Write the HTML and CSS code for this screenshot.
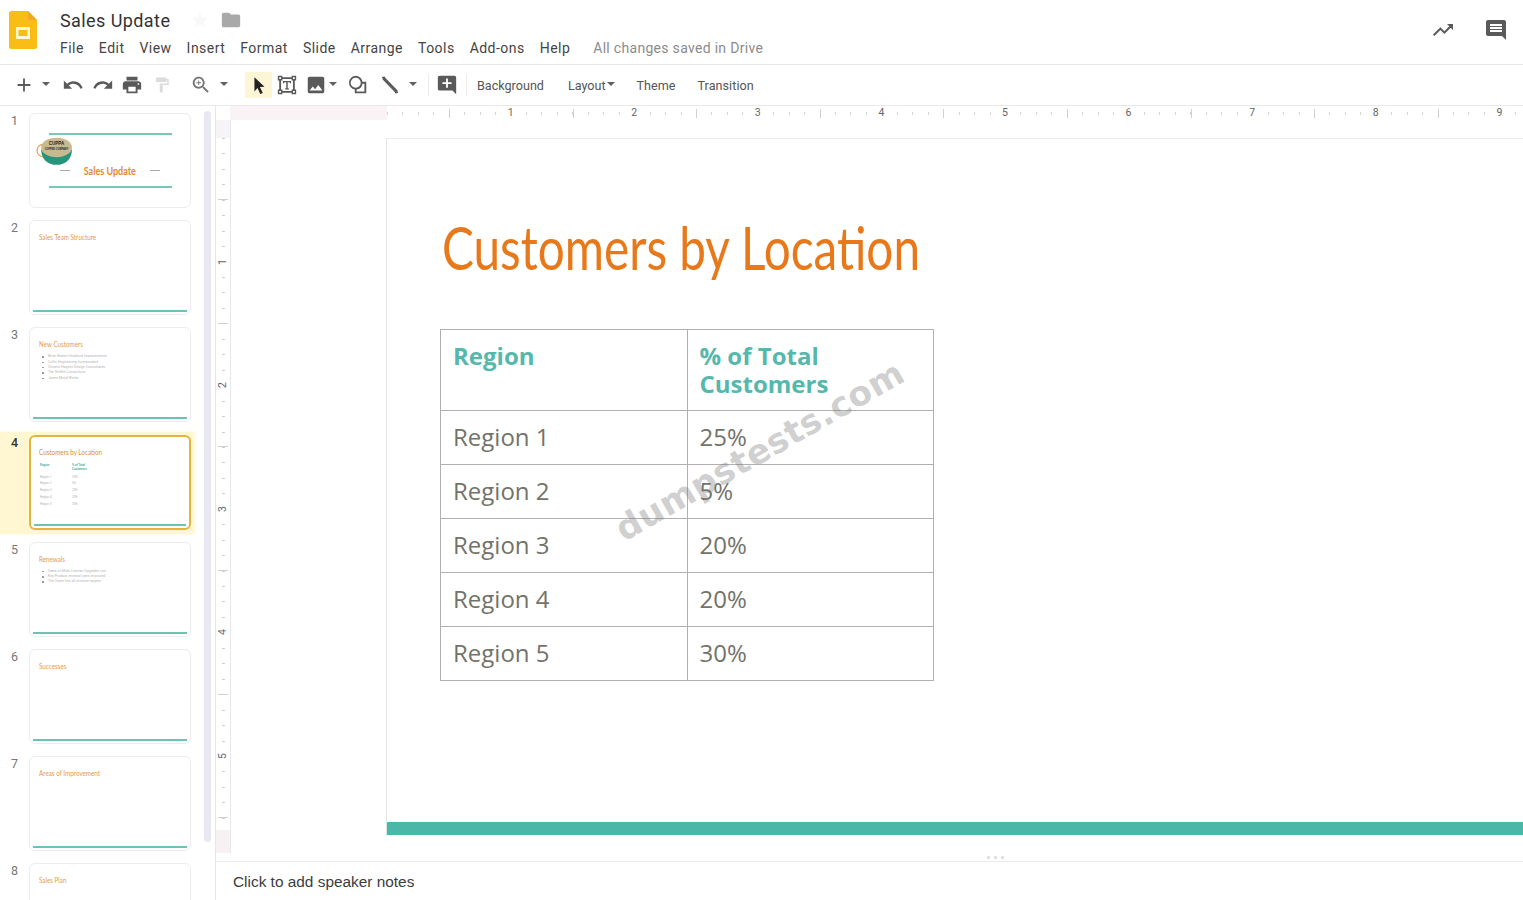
FILE: index.html
```html
<!DOCTYPE html>
<html lang="en">
<head>
<meta charset="utf-8">
<title>Sales Update</title>
<link rel="stylesheet" href="styles.css">
</head>
<body>
<div class="app">
  <header class="topbar">
    <svg class="logo" viewBox="0 0 28 38"><path fill="#f9bd16" d="M2.500 0H19l9 9v26.500a2.500 2.500 0 0 1-2.500 2.500h-23A2.500 2.500 0 0 1 0 35.500v-33A2.500 2.500 0 0 1 2.500 0z"/><path fill="#f5a623" d="M19 0l9 9h-7a2 2 0 0 1-2-2z"/><path fill="#fff6d8" d="M7 16h14v12H7z"/><path fill="#f9bd16" d="M9.500 19h9v6h-9z"/></svg>
    <div class="doc">
      <div class="doc-title">
        <span class="doc-name">Sales Update</span>
        <svg class="star" viewBox="0 0 24 24"><path fill="#f8f8f8" d="M12 17.300l6.200 3.700-1.600-7L22 9.200l-7.200-.6L12 2 9.200 8.600 2 9.200 7.500 14l-1.700 7z"/></svg>
        <svg class="folder" viewBox="0 0 24 24"><path fill="#a9a9a9" d="M10 4H4c-1.100 0-1.990.9-1.990 2L2 18c0 1.100.9 2 2 2h16c1.100 0 2-.9 2-2V8c0-1.100-.9-2-2-2h-8l-2-2z"/></svg>
      </div>
      <nav class="menu">
        <span>File</span><span>Edit</span><span>View</span><span>Insert</span><span>Format</span><span>Slide</span><span>Arrange</span><span>Tools</span><span>Add-ons</span><span>Help</span>
        <span class="saved">All changes saved in Drive</span>
      </nav>
    </div>
    <div class="top-actions">
      <svg class="ic" viewBox="0 0 24 24"><path d="M16 6l2.290 2.290-4.880 4.880-4-4L2 16.590 3.410 18l6-6 4 4 6.300-6.290L22 12V6z"/></svg>
      <svg class="ic" viewBox="0 0 24 24"><path d="M21.990 4c0-1.100-.89-2-1.990-2H4c-1.100 0-2 .9-2 2v12c0 1.100.9 2 2 2h14l4 4-.01-18zM18 14H6v-2h12v2zm0-3H6V9h12v2zm0-3H6V6h12v2z"/></svg>
    </div>
  </header>

  <div class="toolbar">
    <svg class="ic" viewBox="0 0 24 24"><path d="M19 13h-6v6h-2v-6H5v-2h6V5h2v6h6v2z"/></svg>
    <span class="caret g4"></span>
    <svg class="ic g9" viewBox="0 0 24 24"><path d="M12.500 8c-2.650 0-5.050.99-6.900 2.600L2 7v9h9l-3.620-3.620c1.390-1.160 3.160-1.880 5.120-1.880 3.540 0 6.550 2.310 7.600 5.500l2.370-.78C21.080 11.030 17.150 8 12.500 8z"/></svg>
    <svg class="ic g6" viewBox="0 0 24 24"><path d="M18.400 10.600C16.550 8.990 14.150 8 11.500 8c-4.650 0-8.580 3.030-9.960 7.220L3.900 16c1.050-3.190 4.050-5.500 7.600-5.500 1.950 0 3.730.72 5.120 1.880L13 16h9V7l-3.600 3.600z"/></svg>
    <svg class="ic g5" viewBox="0 0 24 24"><path d="M19 8H5c-1.660 0-3 1.340-3 3v6h4v4h12v-4h4v-6c0-1.660-1.340-3-3-3zm-3 11H8v-5h8v5zm3-7c-.55 0-1-.45-1-1s.45-1 1-1 1 .45 1 1-.45 1-1 1zm-1-9H6v4h12V3z"/></svg>
    <svg class="ic g6 faint" viewBox="0 0 24 24"><path d="M18 4V3c0-.55-.45-1-1-1H5c-.55 0-1 .45-1 1v4c0 .55.45 1 1 1h12c.55 0 1-.45 1-1V6h1v4H9v11c0 .55.45 1 1 1h2c.55 0 1-.45 1-1v-9h8V4h-3z"/></svg>
    <svg class="ic g15 soft" viewBox="0 0 24 24"><path d="M15.500 14h-.79l-.28-.27C15.410 12.590 16 11.110 16 9.500 16 5.910 13.090 3 9.500 3S3 5.910 3 9.500 5.910 16 9.500 16c1.610 0 3.090-.59 4.230-1.570l.27.28v.79l5 4.990L20.490 19l-4.990-5zm-6 0C7.010 14 5 11.990 5 9.500S7.010 5 9.500 5 14 7.010 14 9.500 11.990 14 9.500 14z"/><path d="M10 7H9v2H7v1h2v2h1v-2h2V9h-2z"/></svg>
    <span class="caret g5"></span>
    <span class="tool-on g15"><svg class="ic dark" viewBox="0 0 24 24"><path d="M7 3.500l11 10.300-5 .4 3.100 6.400-2.700 1.200-3-6.500L7 19z"/></svg></span>
    <svg class="ic g3" viewBox="0 0 24 24"><path fill-rule="evenodd" d="M2 2h5v1.500h10V2h5v5h-1.500v10H22v5h-5v-1.500H7V22H2v-5h1.500V7H2zm3.500 5v10H7v1.500h10V17h1.500V7H17V5.500H7V7zM3.500 3.500v2h2v-2zm15 0v2h2v-2zm-15 15v2h2v-2zm15 0v2h2v-2z"/><path d="M7.500 7.500h9v2.500h-1.500V9h-2.200v6.500H14V17h-4v-1.500h1.200V9H9v1H7.500z"/></svg>
    <svg class="ic g5" viewBox="0 0 24 24"><path d="M21 19V5c0-1.100-.9-2-2-2H5c-1.100 0-2 .9-2 2v14c0 1.100.9 2 2 2h14c1.100 0 2-.9 2-2zM8.500 13.500l2.500 3.010L14.500 12l4.500 6H5l3.500-4.500z"/></svg>
    <span class="caret tight"></span>
    <svg class="ic g8" viewBox="0 0 24 24"><path fill-rule="evenodd" d="M9.500 2a7.500 7.500 0 0 1 7.400 6.500H21V21H8.500v-4.100A7.500 7.500 0 0 1 9.500 2zm0 2a5.500 5.500 0 1 0 0 11 5.500 5.500 0 0 0 0-11zm7.400 6.500a7.500 7.500 0 0 1-6.400 6.400V19H19v-8.500z"/></svg>
    <svg class="ic g8" viewBox="0 0 24 24"><path d="M3.200 3.200l2.800-.6 1.600 2.200L20 17.800l.8 2.800-2.600.6-1.800-2.400L4.200 6.200z"/></svg>
    <span class="caret g5"></span>
    <span class="sep"></span>
    <svg class="ic g6" viewBox="0 0 24 24"><path d="M20 2H4c-1.100 0-2 .9-2 2v12c0 1.100.9 2 2 2h14l4 4V4c0-1.100-.9-2-2-2zm-3 9h-4v4h-2v-4H7V9h4V5h2v4h4v2z"/></svg>
    <span class="sep second"></span>
    <span class="tb-text first">Background</span>
    <span class="tb-text layout">Layout</span><span class="caret tiny"></span>
    <span class="tb-text theme">Theme</span>
    <span class="tb-text transition">Transition</span>
  </div>

  <main class="main">
    <aside class="filmstrip">
      <div class="thumbs">
        <div class="row"><span class="num">1</span>
          <div class="thumb cover">
            <span class="cover-line"></span>
            <div class="cover-title"><i></i><b>Sales Update</b><i></i></div>
            <span class="cover-line"></span>
            <svg class="cup" viewBox="0 0 36 28"><circle cx="7" cy="13" r="6" fill="none" stroke="#e8a04c" stroke-width="1.200"/><path fill="#26957c" d="M5 12h30c0 9-6 15-15 15S5 21 5 12z"/><ellipse cx="20" cy="10" rx="15" ry="9.500" fill="#c9b98e"/><text x="20" y="8" class="cup-a" textLength="15" lengthAdjust="spacingAndGlyphs">CUPPA</text><text x="20" y="13" class="cup-b" textLength="23" lengthAdjust="spacingAndGlyphs">COFFEE COMPANY</text></svg>
          </div>
        </div>
        <div class="row"><span class="num">2</span>
          <div class="thumb"><p class="t-title">Sales Team Structure</p><span class="t-band"></span></div>
        </div>
        <div class="row"><span class="num">3</span>
          <div class="thumb"><p class="t-title">New Customers</p>
            <ul class="t-list"><li>Brian Raskin Stratford Improvements</li><li>Collin Engineering Incorporated</li><li>Vincent Hagelin Design Consultants</li><li>The Griffith Consortium</li><li>Jones Metal Works</li></ul>
            <span class="t-band"></span></div>
        </div>
        <div class="row active"><span class="num">4</span>
          <div class="thumb"><p class="t-title">Customers by Location</p>
            <table class="t-table"><tr class="th"><td>Region</td><td>% of Total<br>Customers</td></tr><tr><td>Region 1</td><td>25%</td></tr><tr><td>Region 2</td><td>5%</td></tr><tr><td>Region 3</td><td>20%</td></tr><tr><td>Region 4</td><td>20%</td></tr><tr><td>Region 5</td><td>30%</td></tr></table>
            <span class="t-band"></span></div>
        </div>
        <div class="row"><span class="num">5</span>
          <div class="thumb"><p class="t-title">Renewals</p>
            <ul class="t-list"><li>Sales of Multi-License Upgrades rise</li><li>Key Product renewal rates improved</li><li>The Team hits all revenue targets</li></ul>
            <span class="t-band"></span></div>
        </div>
        <div class="row"><span class="num">6</span>
          <div class="thumb"><p class="t-title">Successes</p><span class="t-band"></span></div>
        </div>
        <div class="row"><span class="num">7</span>
          <div class="thumb"><p class="t-title">Areas of Improvement</p><span class="t-band"></span></div>
        </div>
        <div class="row"><span class="num">8</span>
          <div class="thumb"><p class="t-title">Sales Plan</p></div>
        </div>
      </div>
      <div class="track"></div>
    </aside>

    <section class="editor">
      <div class="ruler-row">
        <div class="corner"></div>
        <div class="off-slide"></div>
        <div class="h-scale">
          <span><b>1</b></span><span><b>2</b></span><span><b>3</b></span><span><b>4</b></span><span><b>5</b></span><span><b>6</b></span><span><b>7</b></span><span><b>8</b></span><span><b>9</b></span>
        </div>
      </div>
      <div class="canvas-row">
        <div class="v-ruler">
          <div class="v-scale">
            <span><b>1</b></span><span><b>2</b></span><span><b>3</b></span><span><b>4</b></span><span><b>5</b></span>
          </div>
          <div class="v-end"></div>
        </div>
        <div class="stage">
          <article class="slide">
            <h1 class="slide-title">Customers by Location</h1>
            <table class="data">
              <tr class="head"><td>Region</td><td>% of Total Customers</td></tr>
              <tr><td>Region 1</td><td>25%</td></tr>
              <tr><td>Region 2</td><td>5%</td></tr>
              <tr><td>Region 3</td><td>20%</td></tr>
              <tr><td>Region 4</td><td>20%</td></tr>
              <tr><td>Region 5</td><td>30%</td></tr>
            </table>
            <div class="band"></div>
            <div class="watermark">dumpstests.com</div>
          </article>
        </div>
      </div>
      <div class="handle"><i></i><i></i><i></i></div>
      <div class="notes">Click to add speaker notes</div>
    </section>
  </main>
</div>
</body>
</html>
```
FILE: styles.css
```css
* { box-sizing: border-box; }
html, body { margin: 0; padding: 0; height: 100%; background: #fff; overflow: hidden; }
body { font-family: Roboto, "Liberation Sans", sans-serif; color: #444; }
.app { width: 1523px; height: 900px; display: flex; flex-direction: column; overflow: hidden; }

/* top bar */
.topbar { height: 65px; flex: none; display: flex; padding-left: 9px; border-bottom: 1px solid #e6e6e6; }
.logo { width: 28px; height: 38px; margin-top: 11px; margin-right: 23px; flex: none; }
.doc { padding-top: 9px; }
.doc-title { display: flex; align-items: center; height: 22px; }
.doc-name { font-size: 18px; color: #333; width: 130px; letter-spacing: .42px; }
.star { width: 20px; height: 20px; }
.folder { width: 22px; height: 22px; margin-left: 10px; margin-top: -1px; }
.menu { display: flex; gap: 15px; margin-top: 7px; height: 20px; line-height: 20px; font-size: 14px; letter-spacing: .47px; color: #444; }
.saved { margin-left: 8px; color: #8c8c8c; letter-spacing: .3px; }
.top-actions { margin-left: auto; display: flex; align-items: center; gap: 29px; padding: 0 15px 5px 0; }
.ic { width: 24px; height: 24px; flex: none; fill: #5a5a5a; display: block; }
.toolbar .ic { padding: 1px; }
.toolbar .ic.faint { fill: #dcdcdc; padding: 3px; }
.ic.soft { fill: #757575; }
.toolbar .ic.dark { fill: #222; width: 22px; height: 22px; padding: 0; }

/* toolbar */
.toolbar { height: 41px; flex: none; display: flex; align-items: center; padding-left: 12px; border-bottom: 1px solid #e8e8e8; }
.g3 { margin-left: 3px; }
.g4 { margin-left: 4px; }
.g5 { margin-left: 5px; }
.g6 { margin-left: 6px; }
.g8 { margin-left: 8px; }
.g9 { margin-left: 9px; }
.g15 { margin-left: 15px; }
.caret { width: 12px; height: 6px; flex: none; display: flex; justify-content: center; }
.caret::before { content: ""; border: 4px solid transparent; border-top: 4.500px solid #5f5f5f; border-bottom: 0; }
.caret.tight { margin-left: 0; width: 10px; }
.caret.tiny { width: 10px; }
.tool-on { width: 27px; height: 26px; background: #fdf6d6; display: flex; align-items: center; justify-content: center; }
.sep { width: 1px; height: 22px; background: #ececec; margin-left: 9px; }
.sep + .ic { margin-left: 6px; }
.sep.second { margin-left: 7px; }
.tb-text { font-size: 12.600px; color: #555; white-space: nowrap; }
.tb-text.first { margin-left: 10px; }
.tb-text.layout { margin-left: 24px; }
.tb-text.theme { margin-left: 21px; }
.tb-text.transition { margin-left: 22px; letter-spacing: .05px; }

/* main */
.main { flex: 1; min-height: 0; display: flex; }

/* filmstrip */
.filmstrip { width: 216px; flex: none; display: flex; border-right: 1px solid #e6e6e6; overflow: hidden; }
.thumbs { width: 204px; flex: none; padding-top: 7px; }
.row { height: 107.200px; display: flex; position: relative; }
.row.active::before { content: ""; position: absolute; left: 0; top: -3px; width: 193px; height: 102px; background: #fff7d2; box-shadow: 2px 0 3px #fff7d2; }
.num { position: relative; width: 29px; padding-left: 11px; font-size: 12.500px; line-height: 15px; color: #777; flex: none; }
.row.active .num { color: #333; font-weight: 500; }
.thumb { position: relative; width: 162px; height: 95px; background: #fff; border: 1px solid #ececf0; border-radius: 6px; display: flex; flex-direction: column; overflow: hidden; }
.row.active .thumb { border: 2px solid #e3b53a; }
.t-title { margin: 12px 0 0 9px; font-family: Lato, "Liberation Sans", sans-serif; font-size: 7.400px; line-height: 9px; color: #e59a4a; white-space: nowrap; transform: scaleX(.85); transform-origin: left center; }
.row.active .t-title { margin-left: 8px; margin-top: 11px; color: #d98c3a; }
.t-band { margin: auto 3px 2px; height: 2px; background: #6cc2b5; flex: none; }
.t-list { margin: 5px 0 0 18px; padding: 0; list-style: none; font-size: 3.600px; line-height: 5.300px; color: #b4b4b4; white-space: nowrap; }
.t-list li { position: relative; }
.t-list li::before { content: ""; position: absolute; left: -6px; top: 2px; width: 1.500px; height: 1.500px; background: #999; }
.t-table { align-self: flex-start; margin: 6px 0 0 9px; border-collapse: collapse; font-size: 3px; line-height: 3.500px; color: #b4b4b4; }
.t-table td { padding: 1.600px 0; width: 32px; vertical-align: top; }
.t-table .th td { color: #4db6a8; font-weight: 700; padding-bottom: 3px; }
.cover { align-items: center; padding-top: 19px; }
.cover-line { width: 123px; height: 2px; background: #7cc6b9; flex: none; }
.cover-title { display: flex; align-items: center; justify-content: center; gap: 8px; height: 51px; padding-top: 20px; font-family: Lato, "Liberation Sans", sans-serif; font-size: 11px; color: #e58a2c; }
.cover-title i { width: 10px; height: 1px; background: #aaa; }
.cover-title b { font-weight: 700; white-space: nowrap; transform: scaleX(.82); }
.cup { position: absolute; left: 6px; top: 23px; width: 37px; height: 29px; }
.cup-a { font: 700 6px "Liberation Sans", sans-serif; text-anchor: middle; fill: #222; }
.cup-b { font: 700 3px "Liberation Sans", sans-serif; text-anchor: middle; fill: #222; }
.track { width: 7px; height: 731px; margin-top: 5px; border-radius: 4px; background: #e8e8f2; flex: none; }

/* editor */
.editor { flex: 1; min-width: 0; display: flex; flex-direction: column; }
.ruler-row { height: 14px; flex: none; display: flex; }
.corner { width: 14px; flex: none; }
.off-slide { width: 157px; flex: none; background: #f9f3f6; }
.h-scale { flex: 1; display: flex; padding-left: 61.800px; background:
  repeating-linear-gradient(to right, #d0d0d0 0 1px, transparent 1px 123.600px) 61.800px 3px / 100% 9px no-repeat,
  repeating-linear-gradient(to right, #d4d4d4 0 1px, transparent 1px 15.450px) 0 6px / 100% 3px no-repeat; }
.h-scale span { width: 123.600px; flex: none; text-align: center; line-height: 14px; font-size: 10.500px; color: #666; }
.h-scale b { font-weight: 400; background: #fff; padding: 0 3px; }
.canvas-row { height: 733px; flex: none; display: flex; }
.v-ruler { width: 15px; flex: none; display: flex; flex-direction: column; padding-top: 18px; background: linear-gradient(#f6f4f6, #f6f4f6) 0 0 / 100% 18px no-repeat; border-right: 1px solid #e8e8ea; }
.v-scale { height: 692px; flex: none; padding-top: 61.800px; background:
  repeating-linear-gradient(to bottom, transparent 0 61.300px, #d0d0d0 61.300px 62.300px, transparent 62.300px 123.600px) 2px 0 / 10px 100% no-repeat,
  repeating-linear-gradient(to bottom, #d0d0d0 0 1px, transparent 1px 15.450px) 6px 0 / 3px 100% no-repeat; }
.v-scale span { display: flex; height: 123.600px; align-items: center; justify-content: center; }
.v-scale b { writing-mode: vertical-rl; transform: rotate(180deg); font-weight: 400; font-size: 10.500px; line-height: 14px; color: #666; background: #fff; padding: 3px 0; }
.v-end { flex: 1; background: #f8f1f4; }
.stage { flex: 1; min-width: 0; padding: 18px 0 0 155px; overflow: hidden; }
.slide { position: relative; height: 697px; background: #fff; border-left: 1px solid #e4e4e4; border-top: 1px solid #ececec; display: flex; flex-direction: column; padding-left: 53px; }
.slide-title { margin: 73px 0 0 2px; height: 70px; font-family: Lato, "Liberation Sans", sans-serif; font-weight: 400; font-size: 60px; line-height: 70px; color: #e8791a; white-space: nowrap; transform: scaleX(.795); transform-origin: left center; }
.data { margin-top: 47px; width: 494px; border-collapse: collapse; table-layout: fixed; font-family: "Open Sans", sans-serif; font-size: 24px; color: #73736a; }
.data td { border: 1.500px solid #b0b0b0; height: 54px; padding: 0 12px 2px; vertical-align: middle; }
.data .head td { height: 81px; padding: 12px 12px 0; vertical-align: top; font-weight: 700; line-height: 28px; color: #55b8ac; }
.band { margin-top: auto; height: 13px; flex: none; background: #4bb7a6; width: calc(100% + 53px); margin-left: -53px; }
.watermark { position: absolute; left: 241px; top: 370px; font-family: "DejaVu Sans", sans-serif; font-weight: 700; font-size: 34.300px; letter-spacing: .5px; line-height: 40px; color: rgba(120,120,120,.36); transform: rotate(-29.800deg); transform-origin: left bottom; white-space: nowrap; }
.handle { height: 8px; flex: none; display: flex; gap: 4px; align-items: center; margin-left: 771px; }
.handle i { width: 3px; height: 3px; border-radius: 50%; background: #d8d8d8; }
.notes { flex: 1; border-top: 1px solid #ececec; padding-left: 17px; font-family: "Liberation Sans", sans-serif; font-size: 15.400px; line-height: 40px; color: #3c3c3c; }
```
